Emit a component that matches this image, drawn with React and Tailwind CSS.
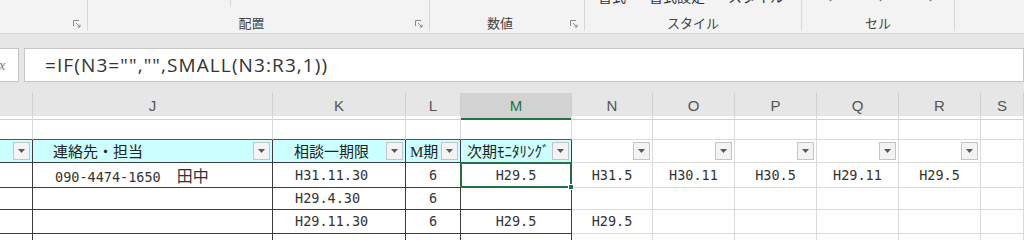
import React from "react";

const CJK = "font-['Noto_Sans_CJK_JP',sans-serif]";
const MONO = "font-['DejaVu_Sans_Mono','Noto_Sans_CJK_JP',monospace]";

function Launcher() {
  return (
    <svg width="8" height="8" viewBox="0 0 8 8" className="mb-[3px] mr-[6px] shrink-0">
      <path d="M0.5 6V0.5H6" stroke="#8a8a8a" strokeWidth="1" fill="none" />
      <path d="M3 3L7 7M7 4.5V7H4.5" stroke="#8a8a8a" strokeWidth="1" fill="none" />
    </svg>
  );
}

function Caret() {
  return (
    <svg width="7" height="4" viewBox="0 0 7 4" className="ml-[4px] inline-block">
      <path d="M0 0H7L3.5 4Z" fill="#666" />
    </svg>
  );
}

function FilterBtn() {
  return (
    <div className="ml-auto mr-[2px] flex h-[18px] w-[17px] shrink-0 items-center justify-center border border-[#c4c4c4] bg-[#f3f3f3]">
      <svg width="7" height="4" viewBox="0 0 7 4">
        <path d="M0 0H7L3.5 4Z" fill="#595959" />
      </svg>
    </div>
  );
}

function Ribbon() {
  return (
    <div className={`flex h-[34px] border-b border-[#d5d5d5] bg-[#f3f3f3] text-[13px] text-[#444] ${CJK}`}>
      <div className="flex h-[31px] w-[88px] flex-col border-r border-[#d8d8d8]">
        <div className="mt-auto flex h-[16px] items-end">
          <div className="flex-1" />
          <Launcher />
        </div>
      </div>
      <div className="flex h-[31px] w-[342px] flex-col border-r border-[#d8d8d8]">
        <div className="ml-[142px] h-[7px] w-px bg-[#d8d8d8]" />
        <div className="mt-auto flex h-[16px] items-end">
          <div className="flex-1 text-center leading-[16px]">配置</div>
          <Launcher />
        </div>
      </div>
      <div className="flex h-[31px] w-[155px] flex-col border-r border-[#d8d8d8]">
        <div className="mt-auto flex h-[16px] items-end">
          <div className="flex-1 text-center leading-[16px]">数値</div>
          <Launcher />
        </div>
      </div>
      <div className="flex h-[31px] w-[217px] flex-col overflow-hidden border-r border-[#d8d8d8]">
        <div className="-mt-[12px] flex h-[16px] shrink-0 items-center text-[14px] leading-[16px] text-[#333]">
          <span className="ml-[13px] flex items-center">書式<Caret /></span>
          <span className="ml-[12px] flex items-center">書式設定<Caret /></span>
          <span className="ml-[12px] flex items-center">スタイル<Caret /></span>
        </div>
        <div className="mt-auto flex h-[16px] items-end">
          <div className="flex-1 text-center leading-[16px]">スタイル</div>
        </div>
      </div>
      <div className="flex h-[31px] w-[153px] flex-col overflow-hidden border-r border-[#d8d8d8]">
        <div className="-mt-[2px] flex h-[5px] shrink-0 items-start">
          <svg width="5" height="4" viewBox="0 0 7 4" className="ml-[26px]"><path d="M0 0H7L3.5 4Z" fill="#777" /></svg>
          <svg width="5" height="4" viewBox="0 0 7 4" className="ml-[45px]"><path d="M0 0H7L3.5 4Z" fill="#777" /></svg>
          <svg width="5" height="4" viewBox="0 0 7 4" className="ml-[45px]"><path d="M0 0H7L3.5 4Z" fill="#777" /></svg>
        </div>
        <div className="mt-auto flex h-[16px] items-end">
          <div className="flex-1 text-center leading-[16px]">セル</div>
        </div>
      </div>
      <div className="h-[31px] flex-1" />
    </div>
  );
}

function FormulaBar() {
  return (
    <div className="flex h-[48px] flex-col bg-[#e6e6e6]">
      <div className="h-[14px]" />
      <div className="flex h-[34px]">
        <div className="flex w-[19px] items-center overflow-hidden border-y border-r border-[#c6c6c6] bg-white">
          <span className="-ml-[1px] font-['Liberation_Serif',serif] text-[14px] italic text-[#777]">x</span>
        </div>
        <div className="ml-[5px] flex flex-1 items-center border border-[#c6c6c6] bg-white pl-[20px] font-['Open_Sans',sans-serif] text-[19px] tracking-[1.1px] text-[#333]">
          =IF(N3="","",SMALL(N3:R3,1))
        </div>
      </div>
    </div>
  );
}

const LETTERS = ["", "J", "K", "L", "M", "N", "O", "P", "Q", "R", "S"];
const GRID = "grid grid-cols-[33px_240px_133px_55px_111px_81px_82px_82px_82px_82px_43px]";

function ColumnHeaders() {
  return (
    <div className="bg-[#e6e6e6]">
      <div className="h-[11px]" />
      <div className={`${GRID} h-[23px] font-['Liberation_Sans',sans-serif] text-[15px] text-[#555]`}>
        {LETTERS.map((l, i) =>
          l === "M" ? (
            <div key={i} className="flex items-center justify-center border-b-2 border-r border-b-[#217346] border-r-[#cfcfcf] bg-[#d2d2d2] pt-[2px] text-[#217346]">
              {l}
            </div>
          ) : (
            <div key={i} className="flex items-center justify-center border-b border-r border-[#cfcfcf] pt-[1px]">
              {l}
            </div>
          )
        )}
      </div>
    </div>
  );
}

/* cell styles */
const LIGHT = "border-r border-b border-[#dadada]";
const DARK = "border-r border-b border-[#3c3c3c]";

function Row1() {
  return (
    <div className={`${GRID} h-[24px]`}>
      {Array.from({ length: 11 }).map((_, i) =>
        i <= 4 ? (
          <div key={i} className="border-b border-r border-b-[#555] border-r-[#dadada]" />
        ) : (
          <div key={i} className={LIGHT} />
        )
      )}
    </div>
  );
}

function HeadCell({ children, cls = "" }) {
  return (
    <div className={`flex items-center overflow-hidden bg-[#ccffff] ${DARK}`}>
      <span className={`min-w-0 flex-1 overflow-hidden whitespace-nowrap ${cls}`}>{children}</span>
      <FilterBtn />
    </div>
  );
}

function Row2() {
  return (
    <div className={`${GRID} h-[23px] ${CJK} text-[15px] leading-[20px] text-[#222]`}>
      <HeadCell />
      <HeadCell cls="pl-[20px]">連絡先・担当</HeadCell>
      <HeadCell cls="pl-[21px]">相談一期限</HeadCell>
      <HeadCell cls="pl-[4px]"><span className="font-['Liberation_Serif',serif]">M</span>期</HeadCell>
      <HeadCell cls="pl-[6px]">次期ﾓﾆﾀﾘﾝｸﾞ</HeadCell>
      {Array.from({ length: 5 }).map((_, i) => (
        <div key={i} className={`flex items-center ${LIGHT}`}>
          <FilterBtn />
        </div>
      ))}
      <div className={LIGHT} />
    </div>
  );
}

function DataRow({ h, j, k, l, m, rest = [], selected = false }) {
  const restCells = [0, 1, 2, 3, 4].map((i) => rest[i] || "");
  return (
    <div className={`${GRID} ${h} ${MONO} text-[13.5px] text-[#333]`}>
      <div className={DARK} />
      <div className={`flex items-center pl-[22px] ${DARK}`}>{j}</div>
      <div className={`flex items-center pl-[22px] ${DARK}`}>{k}</div>
      <div className={`flex items-center justify-center ${DARK}`}>{l}</div>
      {selected ? (
        <div className={`relative flex items-center justify-center ${DARK}`}>
          {m}
          <div className="absolute -left-[1px] -top-[1px] bottom-[-1px] right-[-1px] border-2 border-[#217346]" />
          <div className="absolute bottom-[-3px] right-[-3px] h-[6px] w-[6px] border border-white bg-[#217346]" />
        </div>
      ) : (
        <div className={`flex items-center justify-center ${DARK}`}>{m}</div>
      )}
      {restCells.map((v, i) => (
        <div key={i} className={`flex items-center justify-center ${LIGHT}`}>{v}</div>
      ))}
      <div className={LIGHT} />
    </div>
  );
}

export default function App() {
  return (
    <div className="h-[240px] w-[1024px] overflow-hidden bg-white">
      <Ribbon />
      <FormulaBar />
      <ColumnHeaders />
      <Row1 />
      <Row2 />
      <DataRow
        h="h-[24px]"
        j={<span>090-4474-1650<span className={`${CJK} text-[16px]`}>　田中</span></span>}
        k="H31.11.30"
        l="6"
        m="H29.5"
        rest={["H31.5", "H30.11", "H30.5", "H29.11", "H29.5"]}
        selected
      />
      <DataRow h="h-[23px]" j="" k="H29.4.30" l="6" m="" />
      <DataRow h="h-[24px]" j="" k="H29.11.30" l="6" m="H29.5" rest={["H29.5"]} />
      <DataRow h="h-[24px]" j="" k="H30.11.30" l="6" m="H30.5" rest={["H30.5"]} />
    </div>
  );
}
